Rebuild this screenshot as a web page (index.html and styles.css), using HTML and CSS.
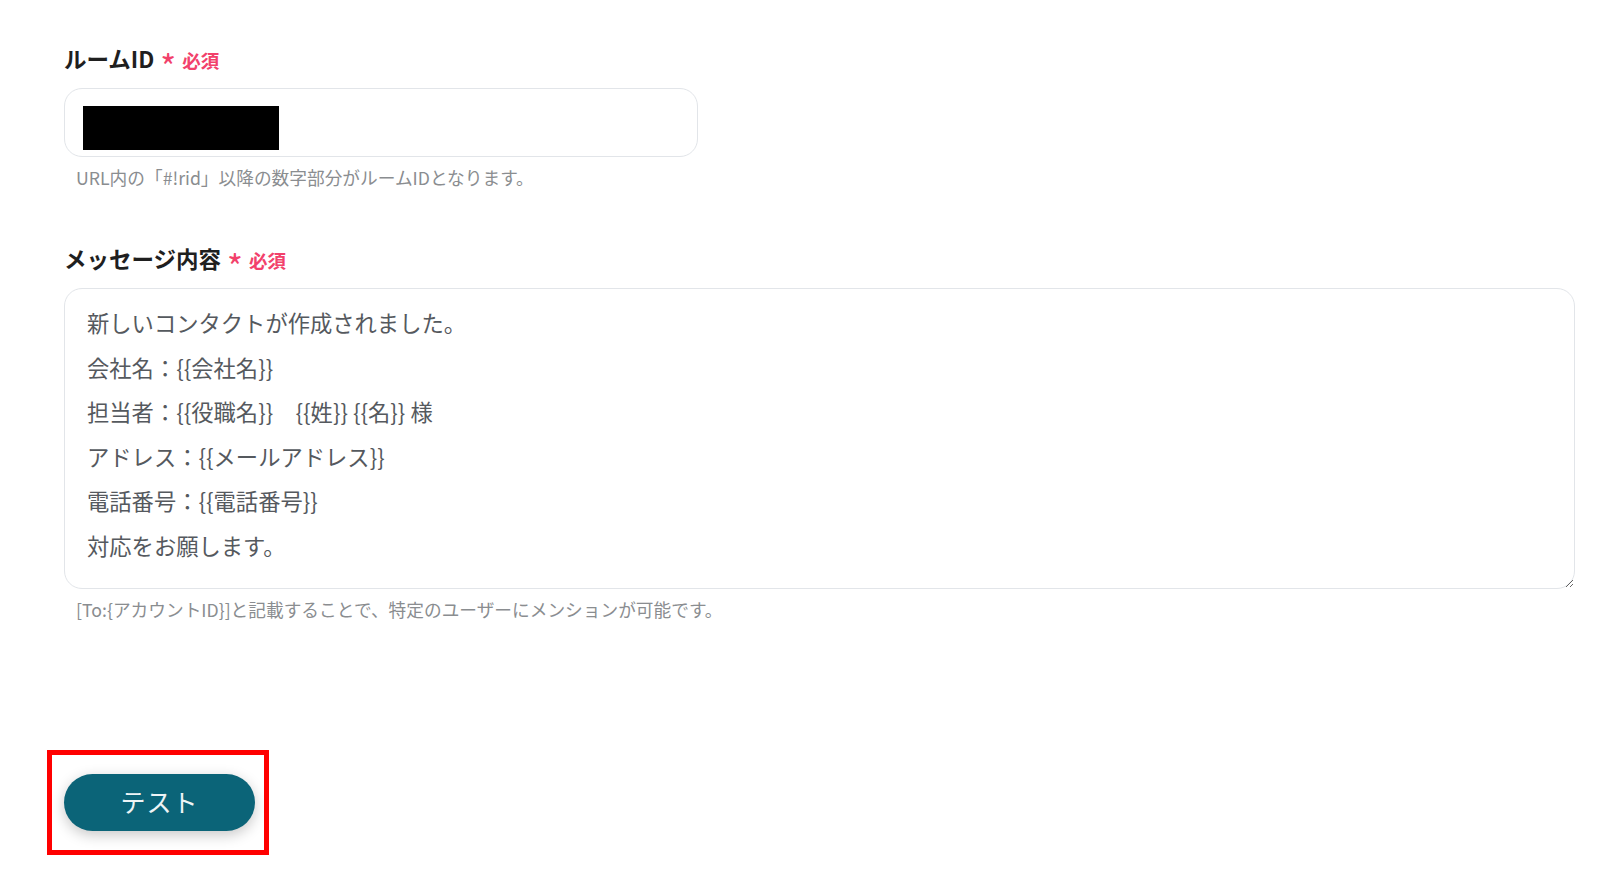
FILE: index.html
```html
<!DOCTYPE html>
<html lang="ja">
<head>
  <meta charset="UTF-8">
  <title>Chatwork メッセージ送信設定</title>
  <meta name="viewport" content="width=device-width, initial-scale=1.0">
  <link rel="stylesheet" href="styles.css">
</head>
<body>
  <div class="form">

    <!-- ルームID -->
    <div class="field field-room">
      <div class="field-label">
        ルームID<span class="req-mark">*</span><span class="req-text">必須</span>
      </div>
      <div class="text-input">
        <div class="redacted"></div>
      </div>
      <div class="help">URL内の「#!rid」以降の数字部分がルームIDとなります。</div>
    </div>

    <!-- メッセージ内容 -->
    <div class="field">
      <div class="field-label">
        メッセージ内容<span class="req-mark">*</span><span class="req-text">必須</span>
      </div>
      <textarea class="message">新しいコンタクトが作成されました。
会社名：{{会社名}}
担当者：{{役職名}}　{{姓}} {{名}} 様
アドレス：{{メールアドレス}}
電話番号：{{電話番号}}
対応をお願します。</textarea>
      <div class="help">[To:{アカウントID}]と記載することで、特定のユーザーにメンションが可能です。</div>
    </div>

    <div class="test-row">
      <div class="highlight">
        <button class="test-button">テスト</button>
      </div>
    </div>

  </div>
</body>
</html>
```

FILE: styles.css
```css
* {
  box-sizing: border-box;
}

body {
  margin: 0;
  padding: 0;
  font-family: "Noto Sans CJK JP", "Noto Sans", sans-serif;
  background-color: #fff;
  color: #222;
}

.form {
  display: flex;
  flex-direction: column;
  padding: 45px 25px 0 64px;
}

.field-room {
  margin-bottom: 57px;
}

.field-label {
  font-size: 22.5px;
  line-height: 26px;
  font-weight: 700;
  color: #1f1f1f;
  margin-bottom: 17px;
}

.req-mark {
  color: #f2416b;
  font-size: 34px;
  line-height: 0;
  font-weight: 400;
  margin-left: 6px;
  position: relative;
  top: 12px;
}

.req-text {
  color: #f2416b;
  font-size: 18.5px;
  line-height: 0;
  font-weight: 700;
  margin-left: 6px;
}

.text-input {
  width: 634px;
  height: 69px;
  border: 1.5px solid #e2e5e9;
  border-radius: 18px;
  padding: 17px 0 0 18px;
  background: #fff;
}

.redacted {
  width: 196px;
  height: 44px;
  background: #000;
}

.help {
  font-size: 17.7px;
  line-height: 22px;
  color: #8a8d90;
  margin-top: 9px;
  padding-left: 12px;
}

.message {
  display: block;
  width: 100%;
  height: 301px;
  border: 1.5px solid #e2e5e9;
  border-radius: 18px;
  padding: 11px 22px;
  font-family: "Noto Sans CJK JP", "Noto Sans", sans-serif;
  font-size: 22.3px;
  line-height: 44.5px;
  color: #55595e;
  resize: vertical;
  outline: none;
}

.test-row {
  display: flex;
  margin-top: 130px;
  margin-left: -17px;
}

.highlight {
  border: 5px solid #ff0000;
  padding: 19px 9px 19px 12px;
}

.test-button {
  width: 191px;
  height: 57px;
  border: none;
  border-radius: 29px;
  padding: 0 0 3px;
  background-color: #0b6478;
  color: #eef4f6;
  font-family: "Noto Sans CJK JP", "Noto Sans", sans-serif;
  font-size: 25px;
  letter-spacing: 1px;
  box-shadow: 0 4px 14px rgba(0, 0, 0, 0.22);
  cursor: pointer;
}
```
